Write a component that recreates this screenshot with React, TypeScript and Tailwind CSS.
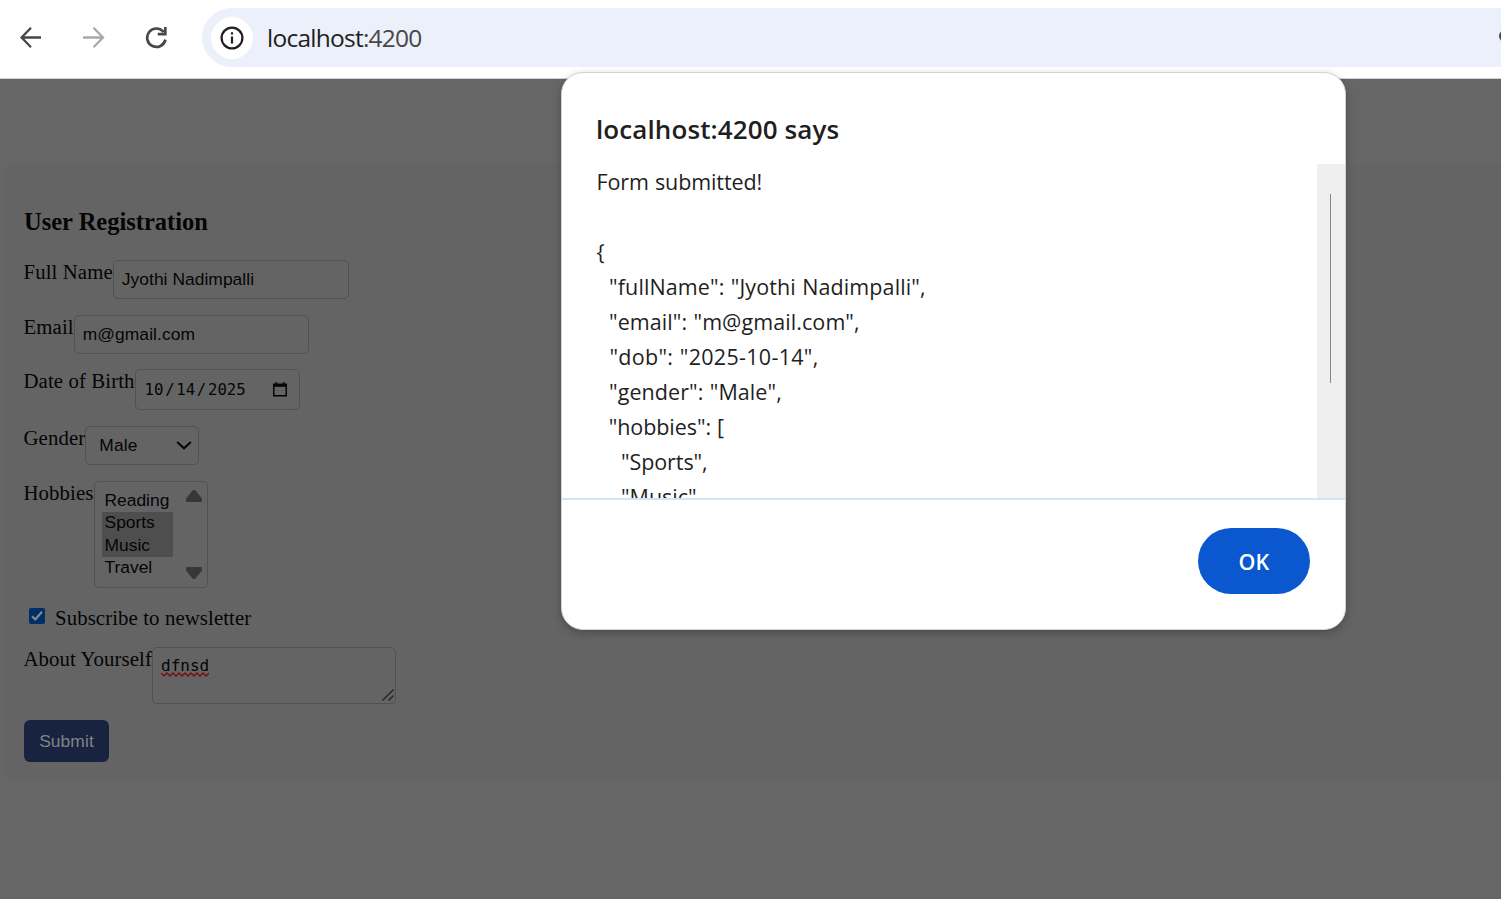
import type { ReactNode } from "react";

const message = [
  { text: "Form submitted!", tracking: "tracking-[-0.1px]" },
  { text: " ", tracking: "tracking-normal" },
  { text: "{", tracking: "tracking-normal" },
  { text: '  "fullName": "Jyothi Nadimpalli",', tracking: "tracking-[0.11px]" },
  { text: '  "email": "m@gmail.com",', tracking: "tracking-[0.08px]" },
  { text: '  "dob": "2025-10-14",', tracking: "tracking-[0.3px]" },
  { text: '  "gender": "Male",', tracking: "tracking-[0.08px]" },
  { text: '  "hobbies": [', tracking: "tracking-[-0.07px]" },
  { text: '    "Sports",', tracking: "tracking-[-0.07px]" },
  { text: '    "Music"', tracking: "tracking-[-0.04px]" },
];

function Toolbar() {
  return (
    <header className="flex h-[79px] shrink-0 items-start border-b border-[#d0d0d0] bg-white pt-2">
      <div className="flex h-[59px] w-[202px] shrink-0 items-center">
        <svg className="ml-[20px] h-[22px] w-[22px]" viewBox="0 0 22 22" fill="none" stroke="#474747" strokeWidth="2.3">
          <path d="M21 10.5H2M11 .8L1.6 10.5L11 20.2" />
        </svg>
        <svg className="ml-[41px] h-[22px] w-[22px]" viewBox="0 0 22 22" fill="none" stroke="#a9a9a9" strokeWidth="2.3">
          <path d="M0 10.5H19.5M10.5 .8L20 10.5L10.5 20.2" />
        </svg>
        <svg className="ml-[40px] h-[22px] w-[23px]" viewBox="0 0 23 22" fill="none" stroke="#474747" strokeWidth="2.7">
          <path d="M18.6 5A9.2 9.2 0 1 0 20.4 12.6M12.8 7.2H20.3V0" />
        </svg>
      </div>
      <div className="flex h-[59px] flex-1 items-center overflow-hidden rounded-l-full bg-[#ecf0fa] pl-[9px]">
        <div className="flex h-[42px] w-[42px] items-center justify-center rounded-full bg-white">
          <svg className="h-6 w-6" viewBox="0 0 24 24" fill="none" stroke="#1f1f1f" strokeWidth="2.2">
            <circle cx="12" cy="12" r="10.4" />
            <path d="M12 10.5V17.5M12 6.3V8.6" />
          </svg>
        </div>
        <div className="ml-[14px] whitespace-nowrap font-['Open_Sans','Noto_Sans',sans-serif] text-[24.5px] leading-[59px] tracking-[-0.75px] text-[#1f1f1f]">
          localhost<span className="text-[#474747]">:4200</span>
        </div>
        <svg className="mb-1 ml-auto h-3 w-[2px]" viewBox="0 0 2 12">
          <circle cx="6" cy="6" r="6" fill="#474747" />
        </svg>
      </div>
    </header>
  );
}

function Row({ label, children }: { label: string; children: ReactNode }) {
  return (
    <div className="flex items-start">
      <span className="-ml-[0.5px] whitespace-nowrap text-[20.8px] leading-6 tracking-[0.1px]">{label}</span>
      {children}
    </div>
  );
}

const box = "shrink-0 rounded-[5px] border border-[#515151]";
const sans = "font-['Liberation_Sans',Arial,sans-serif] text-[17.4px]";

function RegistrationForm() {
  return (
    <main className="mt-[85px] ml-1 h-[616px] rounded-l-[10px] bg-[#646464] pl-5 font-['Liberation_Serif','Times_New_Roman',serif] text-[#050505]">
      <h3 className="pt-[44px] text-[24.5px] leading-7 font-bold">User Registration</h3>
      <div className="mt-[24px] flex flex-col">
        <Row label="Full Name">
          <div className={`${box} ${sans} h-[39px] w-[236px] pl-2 leading-[36px] tracking-[0.05px]`}>Jyothi Nadimpalli</div>
        </Row>
        <div className="mt-4">
          <Row label="Email">
            <div className={`${box} ${sans} h-[39px] w-[235px] pl-2 leading-[36px] tracking-[0.1px]`}>m@gmail.com</div>
          </Row>
        </div>
        <div className="mt-[15px]">
          <Row label="Date of Birth">
            <div className={`${box} flex h-[41px] w-[165px] items-center pt-px pl-[9px] font-['DejaVu_Sans_Mono',monospace] text-[15.7px]`}>
              <span>10</span>
              <span className="mx-[1.7px]">/</span>
              <span>14</span>
              <span className="mx-[1.7px]">/</span>
              <span>2025</span>
              <svg className="mr-3 mb-px ml-auto h-[15px] w-[14px]" viewBox="0 0 14 15" fill="none" stroke="#050505" strokeWidth="1.5">
                <path d="M.75 2.3H13.25V13.8H.75Z" />
                <path d="M.75 3.5H13.25" strokeWidth="2.6" />
                <path d="M3.2 0V3M10.8 0V3" />
              </svg>
            </div>
          </Row>
        </div>
        <div className="mt-4">
          <Row label="Gender">
            <div className={`${box} ${sans} flex h-[39px] w-[114px] items-center justify-between pr-[6px] pb-px pl-[13px]`}>
              <span className="tracking-[0.1px]">Male</span>
              <svg className="h-[9px] w-[16px]" viewBox="0 0 16 9" fill="none" stroke="#050505" strokeWidth="2">
                <path d="M1.2 .9L8 7.3L14.8 .9" />
              </svg>
            </div>
          </Row>
        </div>
        <div className="mt-4">
          <Row label="Hobbies">
            <div className={`${box} ${sans} flex h-[107px] w-[114px] pt-[7px] pl-[7px] leading-[22.4px]`}>
              <div className="h-[90px] w-[71px]">
                <div className="h-[23px] pl-[3px]">Reading</div>
                <div className="h-[22px] bg-[#4e4e4e] pl-[3px] leading-[21px]">Sports</div>
                <div className="h-[23px] bg-[#4e4e4e] pl-[3px]">Music</div>
                <div className="pl-[3px] leading-[21px]">Travel</div>
              </div>
              <div className="mt-px ml-[13px] flex h-[89px] flex-col justify-between">
                <svg className="h-3 w-4" viewBox="0 0 16 12" fill="#373737" stroke="#373737" strokeWidth="2" strokeLinejoin="round">
                  <path d="M7.5 1H8.5L15 9V11H1V9Z" />
                </svg>
                <svg className="h-3 w-4" viewBox="0 0 16 12" fill="#373737" stroke="#373737" strokeWidth="2" strokeLinejoin="round">
                  <path d="M7.5 11H8.5L15 3V1H1V3Z" />
                </svg>
              </div>
            </div>
          </Row>
        </div>
        <div className="mt-4 flex h-[27px] items-start pl-[5px]">
          <svg className="mt-[4px] h-4 w-4" viewBox="0 0 16 16">
            <rect width="16" height="16" rx="2" fill="#002f66" />
            <path d="M3 8.3L6.3 11.5L13 3.8" fill="none" stroke="#888" strokeWidth="2.2" />
          </svg>
          <span className="ml-[10px] whitespace-nowrap text-[20.8px] leading-[28px] tracking-[0.1px]">Subscribe to newsletter</span>
        </div>
        <div className="mt-4">
          <Row label="About Yourself">
            <div className={`${box} relative h-[57px] w-[244px] pt-[8px] pl-2 font-['DejaVu_Sans_Mono',monospace] text-[16px] leading-[20px]`}>
              dfnsd
              <svg className="absolute top-[24px] left-2 h-[5px] w-12" viewBox="0 0 48 5" fill="none" stroke="#790d0d" strokeWidth="1.4">
                <path d="M0 1L3 4L6 1L9 4L12 1L15 4L18 1L21 4L24 1L27 4L30 1L33 4L36 1L39 4L42 1L45 4L48 1" />
              </svg>
              <svg className="absolute right-px bottom-[2px] h-3 w-3" viewBox="0 0 12 12" fill="none" stroke="#222" strokeWidth="1.4">
                <path d="M.5 11.5L11.5 .5M6.5 11.5L11.5 6.5" />
              </svg>
            </div>
          </Row>
        </div>
        <div className={`${sans} mt-4 h-[42px] w-[85px] rounded-[6px] bg-[#182340] text-center leading-[42px] tracking-[0.1px] text-[#7f828b]`}>Submit</div>
      </div>
    </main>
  );
}

function AlertDialog() {
  return (
    <div role="alertdialog" className="absolute top-[72px] left-[561px] flex h-[558px] w-[785px] flex-col overflow-hidden rounded-[22px] border border-[#d2d4d3] bg-white font-['Open_Sans','Noto_Sans',sans-serif] text-[#1f1f1f] shadow-[0_3px_8px_rgba(0,0,0,0.25)]">
      <h1 className="h-[91px] shrink-0 pt-[38px] pl-[34px] text-[26px] leading-[36px] font-semibold tracking-[0.1px]">localhost:4200 says</h1>
      <div className="flex h-[334px] shrink-0 overflow-hidden">
        <div className="h-full flex-1 overflow-hidden pl-[34.5px] text-[21.5px] leading-[35px] whitespace-pre [word-spacing:0.6px]">
          {message.map((line, i) => (
            <div key={i} className={line.tracking}>{line.text}</div>
          ))}
        </div>
        <div className="h-full w-[28px] bg-[#efefef] pt-[30px] pl-[13px]">
          <div className="h-[189px] w-px bg-[#858585]" />
        </div>
      </div>
      <div className="flex flex-1 justify-end border-t-2 border-[#d3e3fd] pt-[28px] pr-[35px]">
        <button className="h-[66px] w-[112px] rounded-full bg-[#0b57d0] pt-[2px] text-[21.5px] font-semibold tracking-[0.1px] text-white">OK</button>
      </div>
    </div>
  );
}

export default function App() {
  return (
    <div className="relative flex h-[899px] w-[1501px] flex-col overflow-hidden bg-[#666666]">
      <Toolbar />
      <RegistrationForm />
      <AlertDialog />
    </div>
  );
}
